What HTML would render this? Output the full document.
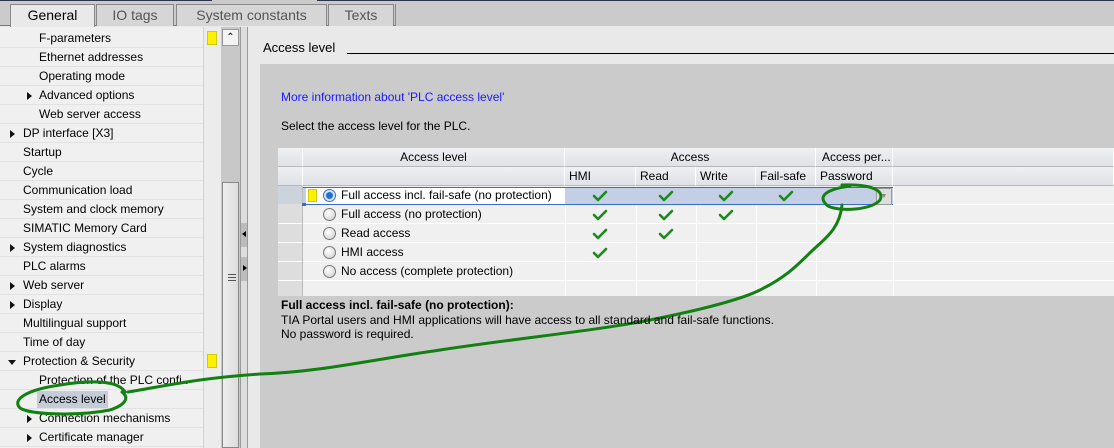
<!DOCTYPE html>
<html><head><meta charset="utf-8"><style>
*{margin:0;padding:0;box-sizing:border-box}
body{width:1114px;height:448px;overflow:hidden;background:#e9e9e9;font-family:"Liberation Sans",sans-serif;font-size:12px;color:#000;position:relative}
.a{position:absolute}
.tab{position:absolute;top:4px;height:22px;border:1px solid #888;border-bottom:none;background:#d6d6d6;color:#555;font-size:14px;text-align:center;line-height:20px}
.tr{position:absolute;left:0;width:203px;height:19px;line-height:19px;border-bottom:1px solid #e2e2e2;white-space:nowrap}
.tri{position:absolute;width:0;height:0;border-top:4px solid transparent;border-bottom:4px solid transparent;border-left:5px solid #111;top:6px}
.trd{position:absolute;width:0;height:0;border-left:4px solid transparent;border-right:4px solid transparent;border-top:5px solid #111;top:8px}
.c{position:absolute;height:19px;line-height:19px;background:#f0f0f0;border-right:1px solid #fff;border-bottom:1px solid #fff;overflow:hidden;white-space:nowrap}
.h{background:linear-gradient(#eef0f3,#dfe2e6);border-right:1px solid #fff;border-bottom:1px solid #b8b8b8}
.rb{position:absolute;left:20px;top:3px;width:13px;height:13px;border-radius:50%;border:1px solid #777;background:radial-gradient(circle at 40% 35%,#fff,#ccc)}
.ck{position:absolute;color:#1a8a1a;font-size:14px;font-weight:bold;top:0}
</style></head><body>
<div class="a" style="left:0;top:0;width:1114px;height:26px;background:#cbcbcb;border-bottom:1px solid #777"></div>
<div class="a" style="left:0;top:0;width:212px;height:1px;background:#2a3550"></div>
<div class="a" style="left:317px;top:0;width:797px;height:1px;background:#2a3550"></div>
<div class="tab" style="left:10px;width:85px;background:#e9e9e9;color:#000;height:23px;font-weight:normal">General</div>
<div class="tab" style="left:96px;width:78px">IO tags</div>
<div class="tab" style="left:176px;width:151px">System constants</div>
<div class="tab" style="left:328px;width:66px">Texts</div>
<div class="a" style="left:395px;top:4px;width:719px;height:22px;border-left:1px solid #888;background:#cbcbcb"></div>

<!-- tree -->
<div class="a" style="left:0;top:27px;width:203px;height:421px;background:#f0f0f0"></div>
<div class="a" style="left:203px;top:27px;width:1px;height:421px;background:#d0d0d0"></div>
<div class="a" style="left:204px;top:27px;width:17px;height:421px;background:#ececec"></div>
<div class="tr" style="top:29px"><span class="a" style="left:39px">F-parameters</span></div>
<div class="tr" style="top:48px"><span class="a" style="left:39px">Ethernet addresses</span></div>
<div class="tr" style="top:67px"><span class="a" style="left:39px">Operating mode</span></div>
<div class="tr" style="top:86px"><i class="tri" style="left:27px"></i><span class="a" style="left:39px">Advanced options</span></div>
<div class="tr" style="top:105px"><span class="a" style="left:39px">Web server access</span></div>
<div class="tr" style="top:124px"><i class="tri" style="left:10px"></i><span class="a" style="left:23px">DP interface [X3]</span></div>
<div class="tr" style="top:143px"><span class="a" style="left:23px">Startup</span></div>
<div class="tr" style="top:162px"><span class="a" style="left:23px">Cycle</span></div>
<div class="tr" style="top:181px"><span class="a" style="left:23px">Communication load</span></div>
<div class="tr" style="top:200px"><span class="a" style="left:23px">System and clock memory</span></div>
<div class="tr" style="top:219px"><span class="a" style="left:23px">SIMATIC Memory Card</span></div>
<div class="tr" style="top:238px"><i class="tri" style="left:10px"></i><span class="a" style="left:23px">System diagnostics</span></div>
<div class="tr" style="top:257px"><span class="a" style="left:23px">PLC alarms</span></div>
<div class="tr" style="top:276px"><i class="tri" style="left:10px"></i><span class="a" style="left:23px">Web server</span></div>
<div class="tr" style="top:295px"><i class="tri" style="left:10px"></i><span class="a" style="left:23px">Display</span></div>
<div class="tr" style="top:314px"><span class="a" style="left:23px">Multilingual support</span></div>
<div class="tr" style="top:333px"><span class="a" style="left:23px">Time of day</span></div>
<div class="tr" style="top:352px"><i class="trd" style="left:8px"></i><span class="a" style="left:23px">Protection &amp; Security</span></div>
<div class="tr" style="top:371px"><span class="a" style="left:39px">Protection of the PLC confi..</span></div>
<div class="tr" style="top:390px"><span class="a" style="left:37px;top:1px;height:17px;line-height:17px;padding:0 2px;background:#c4ccd8">Access level</span></div>
<div class="tr" style="top:409px"><i class="tri" style="left:27px"></i><span class="a" style="left:39px">Connection mechanisms</span></div>
<div class="tr" style="top:428px"><i class="tri" style="left:27px"></i><span class="a" style="left:39px">Certificate manager</span></div>
<div class="a" style="left:207px;top:31px;width:10px;height:14px;background:#ffef00;border:1px solid #cc0"></div>
<div class="a" style="left:207px;top:354px;width:10px;height:14px;background:#ffef00;border:1px solid #cc0"></div>

<!-- scrollbar -->
<div class="a" style="left:221px;top:27px;width:19px;height:421px;background:#c8c8c8"></div>
<div class="a" style="left:222px;top:29px;width:17px;height:17px;background:#f3f3f3;border:1px solid #999;text-align:center;font-size:10px;line-height:16px">&#8963;</div>
<div class="a" style="left:222px;top:182px;width:17px;height:266px;background:linear-gradient(90deg,#eee,#ddd);border:1px solid #888"></div>
<div class="a" style="left:228px;top:274px;width:8px;height:7px;border-top:1px solid #555;border-bottom:1px solid #555"><div style="margin-top:2px;border-top:1px solid #555"></div></div>
<div class="a" style="left:240px;top:27px;width:8px;height:421px;background:#ddd;border-left:1px solid #999;border-right:1px solid #999"></div>
<div class="a" style="left:241px;top:223px;width:6px;height:24px;background:#bbb"></div>
<div class="a" style="left:242px;top:231px;border-top:3px solid transparent;border-bottom:3px solid transparent;border-right:4px solid #000"></div>
<div class="a" style="left:241px;top:257px;width:6px;height:24px;background:#bbb"></div>
<div class="a" style="left:243px;top:265px;border-top:3px solid transparent;border-bottom:3px solid transparent;border-left:4px solid #000"></div>

<!-- right -->
<div class="a" style="left:263px;top:40px;font-size:13px">Access level</div>
<div class="a" style="left:347px;top:53px;width:767px;height:1px;background:#000"></div>
<div class="a" style="left:260px;top:64px;width:854px;height:384px;background:#cbcbcb"></div>
<div class="a" style="left:281px;top:90px;color:#1a1aff">More information about 'PLC access level'</div>
<div class="a" style="left:281px;top:119px">Select the access level for the PLC.</div>

<div class="a" style="left:278px;top:148px;width:836px;height:148px;background:#f0f0f0"></div>
<!-- header rows -->
<div class="c h" style="left:278px;top:148px;width:25px"></div>
<div class="c h" style="left:303px;top:148px;width:262px;text-align:center">Access level</div>
<div class="c h" style="left:565px;top:148px;width:251px;text-align:center">Access</div>
<div class="c h" style="left:816px;top:148px;width:77px;padding-left:6px">Access per...</div>
<div class="c h" style="left:893px;top:148px;width:221px"></div>
<div class="c h" style="left:278px;top:167px;width:25px"></div>
<div class="c h" style="left:303px;top:167px;width:262px"></div>
<div class="c h" style="left:565px;top:167px;width:71px;padding-left:4px">HMI</div>
<div class="c h" style="left:636px;top:167px;width:60px;padding-left:4px">Read</div>
<div class="c h" style="left:696px;top:167px;width:60px;padding-left:4px">Write</div>
<div class="c h" style="left:756px;top:167px;width:60px;padding-left:4px">Fail-safe</div>
<div class="c h" style="left:816px;top:167px;width:77px;padding-left:4px">Password</div>
<div class="c h" style="left:893px;top:167px;width:221px"></div>

<!-- row gridlines -->
<div class="a" style="left:278px;top:186px;width:25px;height:110px;background:#ddd"></div>
<div class="a" style="left:278px;top:186px;width:25px;height:18px;background:#ccd3dd"></div>
<div class="a" style="left:303px;top:204px;width:811px;height:1px;background:#fff"></div>
<div class="a" style="left:278px;top:223px;width:836px;height:1px;background:#fff"></div>
<div class="a" style="left:278px;top:242px;width:836px;height:1px;background:#fff"></div>
<div class="a" style="left:278px;top:261px;width:836px;height:1px;background:#fff"></div>
<div class="a" style="left:278px;top:280px;width:836px;height:1px;background:#fff"></div>
<div class="a" style="left:565px;top:186px;width:1px;height:110px;background:#fff"></div>
<div class="a" style="left:636px;top:186px;width:1px;height:110px;background:#fff"></div>
<div class="a" style="left:696px;top:186px;width:1px;height:110px;background:#fff"></div>
<div class="a" style="left:756px;top:186px;width:1px;height:110px;background:#fff"></div>
<div class="a" style="left:816px;top:186px;width:1px;height:110px;background:#fff"></div>
<div class="a" style="left:893px;top:186px;width:1px;height:110px;background:#fff"></div>
<div class="a" style="left:302px;top:186px;width:1px;height:110px;background:#bbb"></div>

<!-- selected row -->
<div class="a" style="left:303px;top:187px;width:590px;height:18px;border-top:1px solid #3a6bd0;border-bottom:1px solid #3a6bd0;background:#c4cfe6"></div>
<div class="a" style="left:306px;top:188px;width:259px;height:16px;background:#fff"></div>
<div class="a" style="left:302px;top:203px;width:4px;height:3px;background:#3a6bd0"></div>
<div class="a" style="left:308px;top:189px;width:9px;height:13px;background:#ffef00;border:1px solid #cc0"></div>
<div class="a" style="left:876px;top:188px;width:16px;height:17px;background:#ddd;border:1px solid #999;font-size:7px;text-align:center;line-height:15px;color:#888">▼</div>

<div class="a" style="left:303px;top:186px;width:262px;height:19px">
<div class="rb" style="background:radial-gradient(circle,#1e6fd0 0 3px,#dfe9f8 4px);border-color:#3a6bd0"></div><span class="a" style="left:38px;top:2px">Full access incl. fail-safe (no protection)</span></div>
<div class="a" style="left:303px;top:205px;width:262px;height:19px"><div class="rb"></div><span class="a" style="left:38px;top:2px">Full access (no protection)</span></div>
<div class="a" style="left:303px;top:224px;width:262px;height:19px"><div class="rb"></div><span class="a" style="left:38px;top:2px">Read access</span></div>
<div class="a" style="left:303px;top:243px;width:262px;height:19px"><div class="rb"></div><span class="a" style="left:38px;top:2px">HMI access</span></div>
<div class="a" style="left:303px;top:262px;width:262px;height:19px"><div class="rb"></div><span class="a" style="left:38px;top:2px">No access (complete protection)</span></div>

<svg class="a" style="left:0;top:0" width="1114" height="448">
<g fill="none" stroke="#1a8a1a" stroke-width="2.6" stroke-linecap="round" stroke-linejoin="round">
<path id="k" d="M0 0 l4 4 l8 -8" transform="translate(594 196)"/>
<use href="#k" x="66"/><use href="#k" x="126"/><use href="#k" x="186"/>
<use href="#k" y="19"/><use href="#k" x="66" y="19"/><use href="#k" x="126" y="19"/>
<use href="#k" y="38"/><use href="#k" x="66" y="38"/>
<use href="#k" y="57"/>
</g>
<g fill="none" stroke="#128012" stroke-width="3" stroke-linecap="round">
<path d="M125 392 C118 380 90 380 60 385 C25 390 12 400 20 408 C30 415 80 416 110 410 C125 405 130 398 122 392"/>
<path d="M128 392 C170 385 200 378 260 374 C320 372 370 360 440 350 C520 338 600 330 650 320 C700 310 740 300 760 290 C790 275 800 262 815 248 C830 235 840 225 842 205"/>
<path d="M842 185 C870 184 885 190 880 200 C872 210 840 212 828 206 C818 198 822 190 850 186"/>
</g>
</svg>

<div class="a" style="left:281px;top:298px;font-weight:bold">Full access incl. fail-safe (no protection):</div>
<div class="a" style="left:281px;top:313px">TIA Portal users and HMI applications will have access to all standard and fail-safe functions.</div>
<div class="a" style="left:281px;top:327px">No password is required.</div>
</body></html>
